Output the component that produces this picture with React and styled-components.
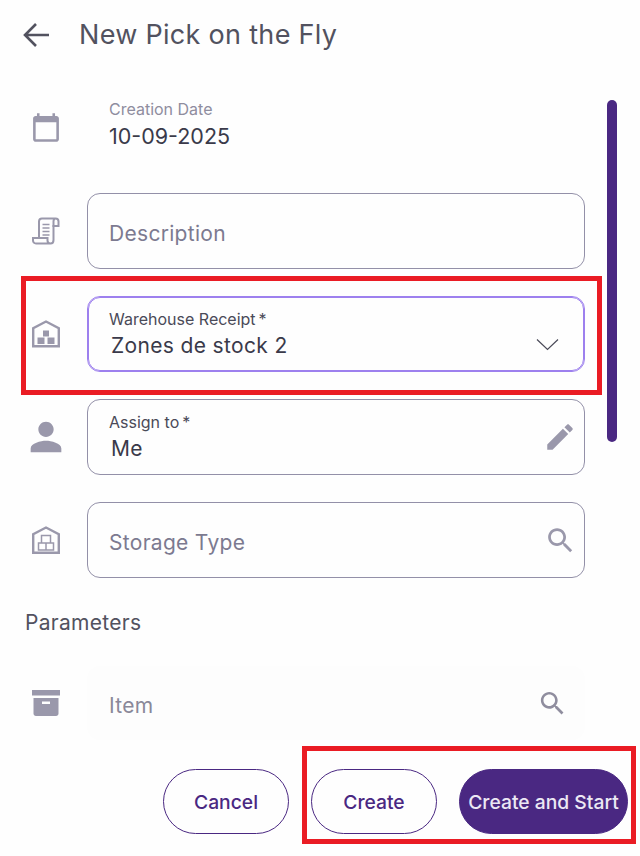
import React from 'react';
import styled, { createGlobalStyle } from 'styled-components';

const Global = createGlobalStyle`
  html, body {
    margin: 0;
    padding: 0;
    background: #fefefe;
    font-family: Inter, "Liberation Sans", sans-serif;
  }
`;

const Page = styled.div`
  position: relative;
  width: 640px;
  height: 856px;
  overflow: hidden;
  background: #fefefe;
`;

const Header = styled.header`
  display: flex;
  align-items: center;
  height: 70px;
  padding-left: 21px;
  color: #52525f;
  svg { display: block; }
`;

const Title = styled.h1`
  margin: 0 0 0 28px;
  font-size: 27px;
  line-height: 34px;
  font-weight: 400;
  letter-spacing: 0.3px;
`;

const Form = styled.div`
  display: flex;
  flex-direction: column;
  gap: 27px;
  width: 585px;
`;

const Row = styled.div`
  display: flex;
  align-items: center;
  margin-top: ${p => p.$top || 0}px;
`;

const IconSlot = styled.div`
  flex: 0 0 87px;
  width: 87px;
  height: 46px;
  padding-left: 46px;
  display: flex;
  align-items: center;
  box-sizing: border-box;
  color: #9a98ab;
  svg {
    flex: none;
    display: block;
    transform: translateX(-50%);
  }
`;

const DateBlock = styled.div`
  height: 56px;
  padding-left: 22px;
`;

const SmallLabel = styled.div`
  font-size: 16px;
  line-height: 20px;
  color: ${p => p.$muted ? '#8f8d9e' : '#4a4a58'};
`;

const DateValue = styled.div`
  margin-top: 3px;
  font-size: 21.5px;
  line-height: 28px;
  color: #3a3a4a;
`;

const Field = styled.div`
  flex: 0 0 498px;
  height: 76px;
  box-sizing: border-box;
  display: flex;
  align-items: center;
  justify-content: space-between;
  padding: 0 7px 0 21px;
  border-radius: 13px;
  border: 1px solid ${p => p.$focused ? '#9d80ee' : '#9390a8'};
  outline: ${p => p.$focused ? '1px solid #9d80ee' : 'none'};
  outline-offset: -2px;
  color: #9a98ab;
`;

const PlainField = styled(Field)`
  border-color: transparent;
  background: #fdfdfd;
  height: 74px;
  padding-right: 16px;
  color: #8f8d9e;
`;

const Placeholder = styled.span`
  padding-top: 6px;
  font-size: 21px;
  line-height: 28px;
  letter-spacing: 0.3px;
  color: #7c7a90;
`;

const ItemPlaceholder = styled(Placeholder)`
  color: #8a8899;
`;

const Stack = styled.div`
  display: flex;
  flex-direction: column;
  padding-top: 1px;
`;

const Required = styled.span`
  margin-left: 3px;
`;

const Value = styled.div`
  margin: 3px 0 0 2px;
  font-size: 21px;
  line-height: 28px;
  letter-spacing: 0.35px;
  color: #3a3a4a;
`;

const SectionLabel = styled.div`
  margin: 31px 0 29px 25px;
  font-size: 21px;
  line-height: 28px;
  letter-spacing: 0.3px;
  color: #52525f;
`;

const Footer = styled.footer`
  display: flex;
  justify-content: flex-end;
  gap: 22px;
  margin-top: 29px;
  padding-right: 12px;
`;

const Button = styled.button`
  flex: none;
  width: ${p => p.$wide ? 169 : 126}px;
  height: 65px;
  padding: 0;
  box-sizing: border-box;
  border-radius: 33px;
  border: 1px solid #4a2882;
  background: ${p => p.$solid ? '#4a2882' : '#fefefe'};
  color: ${p => p.$solid ? '#ece8f4' : '#4a2882'};
  font-family: inherit;
  font-size: 19.3px;
  font-weight: 500;
`;

const ScrollThumb = styled.div`
  position: absolute;
  left: 607px;
  top: 100px;
  width: 10px;
  height: 342px;
  border-radius: 5px;
  background: #4a2882;
`;

const Callout = styled.div`
  position: absolute;
  left: ${p => p.$x}px;
  top: ${p => p.$y}px;
  width: ${p => p.$w}px;
  height: ${p => p.$h}px;
  box-sizing: border-box;
  border: 5px solid #ea1c24;
  pointer-events: none;
`;

const ChevronWrap = styled.div`
  margin: 22px 18px 0 0;
`;

const ArrowBack = () => (
  <svg width="30" height="30" viewBox="0 0 30 30" fill="none" stroke="currentColor" strokeWidth="2.6">
    <path d="M28 15H4M15 4L4 15l11 11" />
  </svg>
);

const CalendarIcon = () => (
  <svg width="31" height="31" viewBox="0 0 24 24" fill="currentColor">
    <path d="M20 3h-1V1h-2v2H7V1H5v2H4c-1.100 0-2 .9-2 2v16c0 1.100.9 2 2 2h16c1.100 0 2-.9 2-2V5c0-1.100-.9-2-2-2zm0 18H4V8h16v13z" />
  </svg>
);

const ScrollIcon = () => (
  <svg width="28" height="28" viewBox="0 0 28 28" fill="none" stroke="currentColor" strokeWidth="2">
    <path d="M7 21V4.500C7 2.500 8 1.500 10 1.500h13.500c1.800 0 3 1.200 3 3V9h-5V4.500c0-1.800.8-3 2-3" />
    <path d="M21.500 8v15c0 2-1 3.500-3 3.500H4c-1.800 0-3-1.300-3-3v-2.500h14.500v2.500c0 1.700 1 3 3 3" />
    <path d="M10.500 7.500h7M10.500 11h7M10.500 14.500h7M10.500 18h7" strokeWidth="1.500" />
  </svg>
);

const WarehouseFilled = () => (
  <svg width="28" height="28" viewBox="0 0 28 28" fill="currentColor">
    <path d="M1.200 26.500V8.300L14 1.500l12.800 6.800v18.200" fill="none" stroke="currentColor" strokeWidth="2.400" />
    <path d="M0 25h28v2.500H0z" />
    <path d="M11 10.500h6v6h-6zM5.500 17.500h7v6.500h-7zM15.500 17.500h7v6.500h-7z" />
  </svg>
);

const WarehouseOutline = () => (
  <svg width="28" height="28" viewBox="0 0 28 28" fill="none" stroke="currentColor">
    <path d="M1.200 26.800V8.300L14 1.500l12.800 6.800v18.500z" strokeWidth="2.400" />
    <path d="M9.500 9.500h9v7.500h-9zM6.500 17h7.500v7H6.500zM14 17h7.500v7H14z" strokeWidth="1.500" />
  </svg>
);

const PersonIcon = () => (
  <svg width="46" height="46" viewBox="0 0 24 24" fill="currentColor">
    <path d="M12 12c2.210 0 4-1.790 4-4s-1.790-4-4-4-4 1.790-4 4 1.790 4 4 4zm0 2c-2.670 0-8 1.340-8 4v2h16v-2c0-2.660-5.330-4-8-4z" />
  </svg>
);

const ArchiveIcon = () => (
  <svg width="28" height="26" viewBox="0 0 28 26" fill="currentColor">
    <path d="M0 0h28v5.500H0z" />
    <path d="M1.500 8h25v15.500c0 1.400-1 2.500-2.500 2.500H4c-1.500 0-2.500-1.100-2.500-2.500zM10 11.500v2.500h8v-2.500z" fillRule="evenodd" />
  </svg>
);

const EditIcon = () => (
  <svg width="34" height="34" viewBox="0 0 24 24" fill="currentColor">
    <path d="M3 17.250V21h3.750L17.810 9.940l-3.750-3.750L3 17.250zM20.710 7.040c.39-.39.39-1.020 0-1.410l-2.340-2.340c-.39-.39-1.020-.39-1.410 0l-1.830 1.830 3.750 3.750 1.830-1.830z" />
  </svg>
);

const SearchIcon = ({ size = 33 }) => (
  <svg width={size} height={size} viewBox="0 0 24 24" fill="currentColor">
    <path d="M15.500 14h-.79l-.28-.27C15.410 12.590 16 11.110 16 9.500 16 5.910 13.090 3 9.500 3S3 5.910 3 9.500 5.910 16 9.500 16c1.610 0 3.090-.59 4.230-1.570l.27.280v.79l5 4.990L20.490 19l-4.990-5zm-6 0C7.010 14 5 11.990 5 9.500S7.010 5 9.500 5 14 7.010 14 9.500 11.990 14 9.500 14z" />
  </svg>
);

const Chevron = () => (
  <svg width="23" height="13" viewBox="0 0 23 13" fill="none" stroke="#4a4a58" strokeWidth="1.200">
    <path d="M1 1.500l10.500 10L22 1.500" />
  </svg>
);

export default function App() {
  return (
    <Page>
      <Global />
      <Header>
        <ArrowBack />
        <Title>New Pick on the Fly</Title>
      </Header>

      <Form>
        <Row $top={29}>
          <IconSlot><CalendarIcon /></IconSlot>
          <DateBlock>
            <SmallLabel $muted>Creation Date</SmallLabel>
            <DateValue>10-09-2025</DateValue>
          </DateBlock>
        </Row>
        <Row $top={11}>
          <IconSlot><ScrollIcon /></IconSlot>
          <Field><Placeholder>Description</Placeholder></Field>
        </Row>
        <Row>
          <IconSlot><WarehouseFilled /></IconSlot>
          <Field $focused>
            <Stack>
              <SmallLabel>Warehouse Receipt<Required>*</Required></SmallLabel>
              <Value>Zones de stock 2</Value>
            </Stack>
            <ChevronWrap><Chevron /></ChevronWrap>
          </Field>
        </Row>
        <Row>
          <IconSlot><PersonIcon /></IconSlot>
          <Field>
            <Stack>
              <SmallLabel>Assign to<Required>*</Required></SmallLabel>
              <Value>Me</Value>
            </Stack>
            <EditIcon />
          </Field>
        </Row>
        <Row>
          <IconSlot><WarehouseOutline /></IconSlot>
          <Field>
            <Placeholder>Storage Type</Placeholder>
            <SearchIcon />
          </Field>
        </Row>
      </Form>

      <SectionLabel>Parameters</SectionLabel>
      <Row>
        <IconSlot><ArchiveIcon /></IconSlot>
        <PlainField>
          <ItemPlaceholder>Item</ItemPlaceholder>
          <SearchIcon size={31} />
        </PlainField>
      </Row>

      <Footer>
        <Button>Cancel</Button>
        <Button>Create</Button>
        <Button $solid $wide>Create and Start</Button>
      </Footer>

      <ScrollThumb />
      <Callout $x={21} $y={276} $w={581} $h={119} />
      <Callout $x={302} $y={746} $w={334} $h={98} />
    </Page>
  );
}
